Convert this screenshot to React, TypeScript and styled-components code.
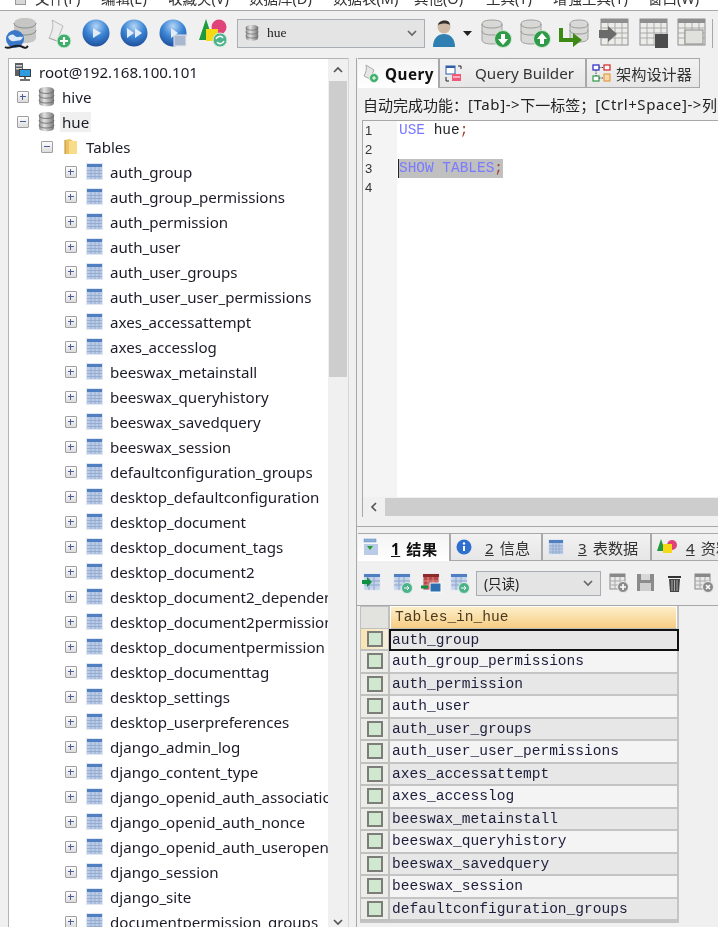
import React from 'react';
import styled, { createGlobalStyle } from 'styled-components';

const Global = createGlobalStyle`
  html, body { margin: 0; padding: 0; background: #f0f0f0; }
  * { box-sizing: border-box; }
  svg { flex: none; display: block; }
`;

const UI = `"Noto Sans", "Noto Sans CJK SC", sans-serif`;
const MONO = `"Liberation Mono", monospace`;

const Page = styled.div`
  width: 718px; height: 927px; overflow: hidden; background: #f0f0f0;
  font-family: ${UI}; color: #1c1c28; filter: blur(0.35px);
  display: flex; flex-direction: column;
`;
const MenuBar = styled.div`
  height: 10px; overflow: hidden; display: flex; align-items: flex-end; padding-left: 15px;
  background: #fff; font-size: 14.5px; color: #333;
`;
const MenuGlyph = styled.div`
  width: 13px; height: 5px; background: #d8d8d8; border: 1px solid #999; border-top: 0; margin-right: 9px; align-self: flex-start;
`;
const MenuItem = styled.span<{ $w: number }>`
  width: ${p => p.$w}px; flex: none; line-height: 20px; height: 20px; margin-bottom: 2px; white-space: nowrap;
`;
const Toolbar = styled.div`
  height: 48px; flex: none; display: flex; align-items: center; padding-left: 2px;
  border-top: 1px solid #a8a8a8; padding-bottom: 3px;
`;
const Tool = styled.div<{ $w: number }>`
  width: ${p => p.$w}px; flex: none; display: flex; justify-content: center; align-items: center;
`;
const Sep = styled.div`
  width: 1px; height: 29px; background: #a8a8a8; margin-left: 8px; flex: none;
`;
const Combo = styled.div<{ $w: number; $h: number }>`
  width: ${p => p.$w}px; height: ${p => p.$h}px; flex: none; display: flex; align-items: center; gap: 8px;
  background: #e4e4e4; border: 1px solid #a9aeb4; padding: 0 6px 0 7px; color: #222;
  & > svg:last-child { color: #666; }
`;
const ComboText = styled.span<{ $font?: string }>`
  flex: 1; font-family: ${p => p.$font || UI}; font-size: 13.5px; white-space: nowrap;
`;
const Main = styled.div`
  flex: 1; display: flex; min-height: 0;
`;
const LeftPanel = styled.div`
  width: 341px; margin-left: 8px; flex: none; display: flex; background: #fff;
  border: 1px solid #b4b4b4; border-bottom: 0; border-right-color: #d8d8d8;
`;
const TreeList = styled.div`
  flex: 1; min-width: 0; overflow: hidden;
`;
const TreeRow = styled.div<{ $depth: number; $root?: boolean }>`
  height: 25px; display: flex; align-items: center; white-space: nowrap;
  padding-left: ${p => (p.$root ? 5 : 8 + p.$depth * 24)}px;
  gap: 9px;
`;
const Expander = styled.div`
  width: 12px; height: 12px; flex: none; border: 1px solid #a0a0a0; border-radius: 1px;
  background: linear-gradient(#fdfdfd, #dcdcdc);
  display: flex; align-items: center; justify-content: center;
`;
const Sign = styled.span<{ $open?: boolean }>`
  display: block; width: 6px; height: 6px;
  background:
    linear-gradient(#4a5f96, #4a5f96) center / 6px 1.4px no-repeat
    ${p => (p.$open ? '' : ', linear-gradient(#4a5f96, #4a5f96) center / 1.4px 6px no-repeat')};
`;
const NodeLabel = styled.span<{ $sel?: boolean }>`
  font-size: 15.1px; line-height: 20px; margin-left: -4px; padding: 0 2px;
  background: ${p => (p.$sel ? '#f0f0f0' : 'transparent')};
`;
const Scroll = styled.div`
  width: 20px; flex: none; background: #f0f0f0; display: flex; flex-direction: column; align-items: center;
`;
const ScrollBtn = styled.div<{ $h: number }>`
  height: ${p => p.$h}px; width: 100%; flex: none; display: flex; align-items: center; justify-content: center; color: #555;
`;
const ThumbV = styled.div`
  width: 18px; height: 296px; background: #cdcdcd; flex: none;
`;
const Spacer = styled.div`
  flex: 1;
`;
const RightPane = styled.div`
  flex: 1; min-width: 0; margin-left: 7px; display: flex; flex-direction: column; overflow: hidden;
  border-left: 1px solid #a8a8a8;
`;
const TabRow = styled.div<{ $h: number }>`
  height: ${p => p.$h}px; flex: none; display: flex; align-items: stretch; padding-left: 1px;
`;
const Tab = styled.div<{ $w: number; $active?: boolean }>`
  width: ${p => p.$w}px; flex: none; display: flex; align-items: center; white-space: nowrap; overflow: hidden;
  font-size: 15.2px; padding-left: 5px;
  border: 1px solid #a8a8a8; border-left-width: ${p => (p.$active ? 0 : 1)}px;
  border-bottom: ${p => (p.$active ? '0' : '1px solid #a8a8a8')};
  background: ${p => (p.$active ? 'linear-gradient(#f4f4f4, #fff)' : 'linear-gradient(#f2f2f2, #e6e6e6)')};
  font-weight: ${p => (p.$active ? 700 : 400)};
  letter-spacing: ${p => (p.$active ? '0.5px' : '0')};
  color: ${p => (p.$active ? '#111' : '#333')};
`;
const TabText = styled.span<{ $ml: number }>`
  margin-left: ${p => p.$ml}px;
`;
const Key = styled.span`
  text-decoration: underline; margin-right: 6px;
`;
const Hint = styled.div`
  height: 32px; flex: none; display: flex; align-items: center; padding-left: 6px; white-space: pre;
  font-size: 15px; color: #222;
`;
const Ltr = styled.span`
  letter-spacing: 0.6px;
`;
const Editor = styled.div`
  height: 377px; flex: none; margin-left: 5px; display: flex; background: #fff;
  border-top: 1px solid #a8a8a8; border-left: 1px solid #a8a8a8;
`;
const Gutter = styled.div`
  width: 34px; flex: none; background: #f4f4f4; padding: 0 0 0 2px;
  font-size: 13px; line-height: 19px; color: #333; font-family: "Liberation Sans", sans-serif;
`;
const Code = styled.div`
  flex: 1; padding: 0 0 0 2px; font-family: ${MONO}; font-size: 14.45px; line-height: 19px; white-space: pre;
`;
const CodeLine = styled.div`
  height: 19px;
`;
const Selected = styled.span`
  display: inline-block; height: 19px; background: #c0c0c0; border-left: 1px solid #222; margin-left: -1px;
`;
const Kw = styled.span`
  color: #7a7aff;
`;
const Plain = styled.span`
  color: #222;
`;
const Semi = styled.span`
  color: #a04030;
`;
const HScroll = styled.div`
  height: 20px; flex: none; margin-left: 5px; display: flex; background: #f0f0f0; border-left: 1px solid #a8a8a8;
`;
const HArrow = styled.div`
  width: 22px; flex: none; display: flex; align-items: center; justify-content: center; color: #555;
`;
const HThumb = styled.div`
  flex: 1; background: #cdcdcd; margin: 1px 0;
`;
const Divider = styled.div`
  height: 16px; flex: none; margin-left: -1px;
  background: linear-gradient(#a8a8a8, #a8a8a8) 0 9px / 100% 1px no-repeat;
`;
const GridBar = styled.div`
  height: 45px; flex: none; display: flex; align-items: center; padding-left: 3px;
  border-bottom: 1px solid #a8a8a8;
`;
const Grid = styled.div`
  width: 319px; margin-left: 3px; display: grid; grid-template-columns: 30px 1fr; grid-auto-rows: 22.5px;
  font-family: ${MONO}; font-size: 14.55px; color: #1e1e3c;
  background: #fff; border-bottom: 2px solid #c4c4c4; border-right: 2px solid #c4c4c4;
`;
const Corner = styled.div`
  background: #e2e2df; border: 1px solid #c0c0c0; border-width: 1px 2px 1px 1px;
`;
const HeadCell = styled.div`
  background: linear-gradient(#fdeec8, #f6cd84); display: flex; align-items: center; padding-left: 4px;
  border: 1px solid #fff; border-bottom-color: #bbb; color: #4a3a20;
`;
const RowHead = styled.div<{ $cur?: boolean }>`
  display: flex; align-items: center; justify-content: center;
  background: ${p => (p.$cur ? 'linear-gradient(90deg, #fbe3b2, #f6efdc)' : '#ecece8')};
  border: 1px solid #c0c0c0; border-width: 0 2px 2px 1px;
`;
const Check = styled.div`
  width: 16px; height: 16px; border: 2px solid #7c7c78; background: #cfe8cf;
`;
const Cell = styled.div<{ $odd: boolean; $cur?: boolean }>`
  display: flex; align-items: center; padding-left: 2px; white-space: nowrap; overflow: hidden;
  background: ${p => (p.$odd ? '#f4f4f4' : '#e7e7e7')};
  border-bottom: 2px solid #c4c4c4;
  ${p => (p.$cur ? 'border: 2px solid #111; margin-left: -1px; margin-right: -2px; padding-left: 1px;' : '')}
`;

const Db = ({ s = 17 }: { s?: number }) => (
  <svg width={s} height={s * 1.25} viewBox="0 0 16 20">
    <defs>
      <linearGradient id="dbg" x1="0" x2="1" y1="0" y2="0">
        <stop offset="0" stopColor="#8c8c8c" /><stop offset=".35" stopColor="#e2e2e2" /><stop offset="1" stopColor="#777" />
      </linearGradient>
    </defs>
    <path d="M1 4c0-2 3-3 7-3s7 1 7 3v12c0 2-3 3-7 3s-7-1-7-3z" fill="url(#dbg)" />
    <path d="M1 4c0 2 3 3 7 3s7-1 7-3M1 8.500c0 2 3 3 7 3s7-1 7-3M1 13c0 2 3 3 7 3s7-1 7-3" fill="none" stroke="#666" strokeWidth=".8" />
  </svg>
);
const TableIco = () => (
  <svg width="17" height="17" viewBox="0 0 17 17">
    <rect x=".5" y=".5" width="16" height="16" fill="#b9cbe6" stroke="#dfe7f3" />
    <rect x="1" y="1" width="15" height="3" fill="#4f7fc0" />
    <path d="M1 7.500h15M1 10.500h15M1 13.500h15M5 4v12M9 4v12M13 4v12" stroke="#8fa6cc" strokeWidth=".8" />
  </svg>
);
const Folder = () => (
  <svg width="17" height="17" viewBox="0 0 17 17">
    <path d="M3 2l5-1 3 2v13H3z" fill="#eec260" />
    <path d="M7 3h8v13H7z" fill="#f7dc8a" />
    <path d="M3 2v14" stroke="#b88d33" />
  </svg>
);
const ServerIco = () => (
  <svg width="18" height="20" viewBox="0 0 18 20">
    <rect x="1" y="1" width="8" height="13" fill="#5c6066" />
    <rect x="2" y="3" width="6" height="1.500" fill="#d0d0d0" /><rect x="2" y="6" width="6" height="1.500" fill="#d0d0d0" />
    <rect x="5" y="7" width="12" height="8" fill="#3a3f46" /><rect x="6" y="8" width="10" height="6" fill="#2f9be0" />
    <path d="M11 15v2M6 18h10" stroke="#444" strokeWidth="1.600" />
  </svg>
);
const Chev = ({ d, s = 12 }: { d: 'u' | 'd' | 'l'; s?: number }) => (
  <svg width={s} height={s} viewBox="0 0 12 12" fill="none" stroke="currentColor" strokeWidth="1.700">
    <path d={d === 'u' ? 'M2 8l4-4 4 4' : d === 'd' ? 'M2 4l4 4 4-4' : 'M8 2L4 6l4 4'} />
  </svg>
);
const Plus = ({ x, y, r = 7 }: { x: number; y: number; r?: number }) => (
  <g>
    <circle cx={x} cy={y} r={r} fill="#3fae6a" stroke="#d8f0e0" strokeWidth="1" />
    <path d={`M${x - r + 3} ${y}h${2 * r - 6}M${x} ${y - r + 3}v${2 * r - 6}`} stroke="#fff" strokeWidth="2.200" />
  </g>
);
const Connect = () => (
  <svg width="34" height="34" viewBox="0 0 34 34">
    <path d="M11 7c0-3 5-5 11-5s11 2 11 5v15c0 3-5 5-11 5s-11-2-11-5z" fill="#c6c6c4" />
    <path d="M11 7c0 3 5 5 11 5s11-2 11-5M11 14c0 3 5 5 11 5s11-2 11-5" fill="none" stroke="#8a8a8a" />
    <circle cx="12" cy="23" r="9" fill="#3b78c8" />
    <path d="M5 21c3-3 5-3 7-1s6 0 8 1c-2 5-5 3-8 4s-5 0-7-4z" fill="#dfeafa" />
    <path d="M2 31c5 3 9-3 15-1s5 3 8 0" fill="none" stroke="#1d1d22" strokeWidth="2" />
  </svg>
);
const NewQuery = () => (
  <svg width="28" height="30" viewBox="0 0 28 30">
    <path d="M7 2l11 6-6 15-8-3c3-6 5-12 3-18z" fill="#ececec" stroke="#b8b8b8" />
    <path d="M4 20l8 3" stroke="#aaa" />
    <Plus x={19} y={23} r={7} />
  </svg>
);
const Orb = ({ kind }: { kind: 'one' | 'two' | 'sel' }) => (
  <svg width="28" height="28" viewBox="0 0 28 28">
    <defs>
      <radialGradient id="orb" cx=".5" cy=".25" r=".85">
        <stop offset="0" stopColor="#b6d5f6" /><stop offset=".45" stopColor="#3c86d6" /><stop offset="1" stopColor="#17408c" />
      </radialGradient>
    </defs>
    <circle cx="14" cy="14" r="13.500" fill="url(#orb)" />
    {kind === 'one' && <path d="M11 9l8 5-8 5z" fill="#e4edf7" />}
    {kind === 'two' && <path d="M7 9l7 5-7 5zM15 9l7 5-7 5z" fill="#e4edf7" />}
    {kind === 'sel' && <><path d="M12 9l7 5-7 5z" fill="#e4edf7" /><rect x="15" y="16" width="12" height="11" fill="#a9b7cf" stroke="#e8e8f0" /></>}
  </svg>
);
const Shapes = () => (
  <svg width="30" height="32" viewBox="0 0 30 32">
    <path d="M8 2l7 21H1z" fill="#1f9a3c" />
    <circle cx="21" cy="10" r="7.500" fill="#e0427a" />
    <rect x="8" y="12" width="12" height="12" fill="#f6d916" />
    <circle cx="22" cy="23" r="7" fill="#4bb28a" stroke="#d8f0e0" />
    <path d="M18 22a4 4 0 017-1M26 24a4 4 0 01-7 1" fill="none" stroke="#fff" strokeWidth="1.500" />
  </svg>
);
const User = () => (
  <svg width="24" height="30" viewBox="0 0 24 30">
    <circle cx="12" cy="9" r="6.500" fill="#cdb9a6" />
    <path d="M6 7c0-5 12-7 12 0-3-2-8-2-12 0z" fill="#33302e" />
    <path d="M1 29c0-9 5-13 11-13s11 4 11 13z" fill="#2f7fb3" />
  </svg>
);
const DbArrow = ({ up }: { up?: boolean }) => (
  <svg width="32" height="30" viewBox="0 0 32 30">
    <path d="M2 6c0-3 5-4 10-4s10 1 10 4v16c0 3-5 4-10 4S2 25 2 22z" fill="#d8d8d6" stroke="#a0a0a0" />
    <path d="M2 6c0 3 5 4 10 4s10-1 10-4M2 13c0 3 5 4 10 4s10-1 10-4" fill="none" stroke="#999" />
    <circle cx="23" cy="21" r="8.500" fill="#2f9a48" stroke="#cfe8d0" />
    <path d={up ? 'M23 15l5 6h-3v5h-4v-5h-3z' : 'M23 27l5-6h-3v-5h-4v5h-3z'} fill="#fff" />
  </svg>
);
const DbIn = () => (
  <svg width="32" height="30" viewBox="0 0 32 30">
    <path d="M12 6c0-3 4-4 9-4s9 1 9 4v14c0 3-4 4-9 4s-9-1-9-4z" fill="#d8d8d6" stroke="#a0a0a0" />
    <path d="M12 6c0 3 4 4 9 4s9-1 9-4M12 12c0 3 4 4 9 4s9-1 9-4" fill="none" stroke="#999" />
    <path d="M1 10h4v10h10v-5l9 7-9 7v-5H1z" fill="#3c8a14" />
  </svg>
);
const GreyGrid = ({ variant }: { variant: 'arrow' | 'calc' | 'multi' }) => (
  <svg width="31" height="30" viewBox="0 0 31 30">
    <rect x="3" y="1" width="27" height="26" fill="#ecece8" stroke="#8e8e8e" />
    <rect x="3" y="1" width="27" height="4" fill="#8e8e8e" />
    <path d="M3 10h27M3 15h27M3 20h27M10 5v22M17 5v22M24 5v22" stroke="#aaa" />
    {variant === 'arrow' && <path d="M1 12h9v-4l9 8-9 8v-4H1z" fill="#6b6b6b" />}
    {variant === 'calc' && <rect x="18" y="16" width="13" height="14" fill="#4c4c4c" />}
    {variant === 'multi' && <rect x="10" y="12" width="18" height="14" fill="#e0e0dc" stroke="#8e8e8e" />}
  </svg>
);
const QueryTabIco = () => (
  <svg width="16" height="20" viewBox="0 0 16 20">
    <path d="M3 1l8 5-4 9-6-3c2-4 3-7 2-11z" fill="#e6e6e6" stroke="#aaa" />
    <circle cx="11" cy="14" r="4.500" fill="#3fae6a" stroke="#d8f0e0" />
    <path d="M9 14h4M11 12v4" stroke="#fff" />
  </svg>
);
const BuilderIco = () => (
  <svg width="17" height="17" viewBox="0 0 17 17">
    <rect x="1" y="1" width="9" height="8" fill="#fff" stroke="#2f5fa8" /><rect x="1" y="1" width="9" height="2" fill="#2f5fa8" />
    <rect x="7" y="9" width="9" height="7" fill="#f05a78" />
    <path d="M8 12h7" stroke="#fff" /><path d="M1 12v4h3M13 1h3v3" stroke="#222" fill="none" />
  </svg>
);
const SchemaIco = () => (
  <svg width="19" height="18" viewBox="0 0 19 18">
    <rect x="1" y="1" width="6" height="5" fill="#fff" stroke="#2222cc" strokeWidth="1.200" />
    <rect x="12" y="1" width="6" height="5" fill="#fff" stroke="#d82020" strokeWidth="1.200" />
    <rect x="1" y="12" width="6" height="5" fill="#fff" stroke="#2f9a48" strokeWidth="1.200" />
    <rect x="12" y="10" width="6" height="7" fill="#f8d8a8" stroke="#e09030" />
    <path d="M7 3.500h5M4 6v6M7 14h5" stroke="#444" strokeDasharray="1.500 1" />
  </svg>
);
const ResIco = () => (
  <svg width="16" height="19" viewBox="0 0 16 19">
    <rect x="1" y="1" width="12" height="3" fill="#8fb0d8" stroke="#5a86c0" strokeWidth=".5" />
    <rect x="1" y="6" width="14" height="11" fill="#b9cbe6" />
    <path d="M7 3v5h3l-3 4-3-4h3z" fill="#22a030" />
  </svg>
);
const PlainTabTable = () => (
  <svg width="16" height="17" viewBox="0 0 16 17">
    <rect x=".5" y=".5" width="15" height="15" fill="#b9cbe6" stroke="#dfe7f3" />
    <rect x="1" y="1" width="14" height="3" fill="#4f7fc0" />
    <path d="M1 7h14M1 10h14M1 13h14M5 4v11M8 4v11M11 4v11" stroke="#8fa6cc" strokeWidth=".8" />
  </svg>
);
const InfoIco = () => (
  <svg width="16" height="16" viewBox="0 0 16 16">
    <circle cx="8" cy="8" r="7.500" fill="#2f6fd0" />
    <path d="M8 7v5" stroke="#fff" strokeWidth="2" /><circle cx="8" cy="4.500" r="1.200" fill="#fff" />
  </svg>
);
const MiniShapes = () => (
  <svg width="20" height="16" viewBox="0 0 20 16">
    <path d="M4 0l4 12H0z" fill="#1f9a3c" /><circle cx="15" cy="6" r="5" fill="#e0427a" /><rect x="6" y="5" width="9" height="9" fill="#f6d916" />
  </svg>
);
const GridIco = ({ kind }: { kind: 'in' | 'refresh' | 'red' | 'refresh2' }) => (
  <svg width="21" height="21" viewBox="0 0 21 21">
    <rect x="2" y="1" width="16" height="16" fill={kind === 'red' ? '#b84a4a' : '#c4d2ea'} stroke="#dfe7f3" />
    <rect x="2" y="1" width="16" height="3" fill={kind === 'red' ? '#8c2a2a' : '#4f7fc0'} />
    <path d="M2 8h16M2 12h16M7 4v13M12 4v13" stroke={kind === 'red' ? '#e08a8a' : '#8fa6cc'} />
    {kind === 'in' && <path d="M0 7h5V4l5 5-5 5v-3H0z" fill="#109040" />}
    {(kind === 'refresh' || kind === 'refresh2') && <><circle cx="15" cy="15" r="5.500" fill="#4bb28a" stroke="#e0f0e8" /><path d="M12 15h5M15 13l2 2-2 2" stroke="#fff" fill="none" /></>}
    {kind === 'red' && <><rect x="9" y="10" width="11" height="9" fill="#2f6fb0" stroke="#fff" /><path d="M0 14h7" stroke="#109040" strokeWidth="3" /></>}
  </svg>
);
const GreyAct = ({ kind }: { kind: 'add' | 'save' | 'trash' | 'x' }) => (
  <svg width="20" height="20" viewBox="0 0 20 20">
    {kind === 'save' && <><rect x="1" y="1" width="17" height="17" fill="#8b8b8b" /><rect x="5" y="1" width="9" height="6" fill="#d8d8d8" /><rect x="4" y="10" width="11" height="8" fill="#cfcfcf" /></>}
    {kind === 'trash' && <><rect x="3" y="3" width="13" height="2" fill="#333" /><path d="M4 6h11l-1 13H5z" fill="#444" /><path d="M7 7v11M9.500 7v11M12 7v11" stroke="#aaa" /></>}
    {(kind === 'add' || kind === 'x') && <>
      <rect x="1" y="1" width="15" height="15" fill="#e8e8e8" stroke="#888" /><rect x="1" y="1" width="15" height="3" fill="#888" />
      <path d="M1 8h15M1 12h15M6 4v12M11 4v12" stroke="#aaa" />
      <circle cx="14" cy="14" r="5.500" fill="#8a8a8a" stroke="#eee" />
      <path d={kind === 'add' ? 'M11 14h6M14 11v6' : 'M12 12l4 4M16 12l-4 4'} stroke="#fff" strokeWidth="1.600" />
    </>}
  </svg>
);

const tables = [
  'auth_group', 'auth_group_permissions', 'auth_permission', 'auth_user', 'auth_user_groups', 'auth_user_user_permissions',
  'axes_accessattempt', 'axes_accesslog', 'beeswax_metainstall', 'beeswax_queryhistory', 'beeswax_savedquery', 'beeswax_session',
  'defaultconfiguration_groups', 'desktop_defaultconfiguration', 'desktop_document', 'desktop_document_tags', 'desktop_document2',
  'desktop_document2_dependencies', 'desktop_document2permission', 'desktop_documentpermission', 'desktop_documenttag',
  'desktop_settings', 'desktop_userpreferences', 'django_admin_log', 'django_content_type', 'django_openid_auth_association',
  'django_openid_auth_nonce', 'django_openid_auth_useropenid', 'django_session', 'django_site', 'documentpermission_groups',
];
const menus: [string, number][] = [['文件(F)', 66], ['编辑(E)', 67], ['收藏夹(V)', 81], ['数据库(D)', 84], ['数据表(M)', 81], ['其他(O)', 72], ['工具(T)', 67], ['增强工具(Y)', 95], ['窗口(W)', 70]];

export default function App() {
  return (
    <Page>
      <Global />
      <MenuBar>
        <MenuGlyph />
        {menus.map(([m, w]) => <MenuItem key={m} $w={w}>{m}</MenuItem>)}
      </MenuBar>
      <Toolbar>
        <Tool $w={35}><Connect /></Tool>
        <Tool $w={44}><NewQuery /></Tool>
        <Tool $w={30}><Orb kind="one" /></Tool>
        <Tool $w={46}><Orb kind="two" /></Tool>
        <Tool $w={32}><Orb kind="sel" /></Tool>
        <Tool $w={48}><Shapes /></Tool>
        <Combo $w={188} $h={29}>
          <Db s={14} />
          <ComboText $font={`"Liberation Serif", serif`}>hue</ComboText>
          <Chev d="d" />
        </Combo>
        <Tool $w={38}><User /></Tool>
        <Tool $w={9}><svg width="9" height="5" viewBox="0 0 9 5"><path d="M0 0h9L4.500 5z" fill="#222" /></svg></Tool>
        <Tool $w={48}><DbArrow /></Tool>
        <Tool $w={30}><DbArrow up /></Tool>
        <Tool $w={48}><DbIn /></Tool>
        <Tool $w={30}><GreyGrid variant="arrow" /></Tool>
        <Tool $w={48}><GreyGrid variant="calc" /></Tool>
        <Tool $w={28}><GreyGrid variant="multi" /></Tool>
        <Sep />
      </Toolbar>
      <Main>
        <LeftPanel>
          <TreeList>
            <TreeRow $depth={0} $root><ServerIco /><NodeLabel>root@192.168.100.101</NodeLabel></TreeRow>
            <TreeRow $depth={0}><Expander><Sign /></Expander><Db /><NodeLabel>hive</NodeLabel></TreeRow>
            <TreeRow $depth={0}><Expander><Sign $open /></Expander><Db /><NodeLabel $sel>hue</NodeLabel></TreeRow>
            <TreeRow $depth={1}><Expander><Sign $open /></Expander><Folder /><NodeLabel>Tables</NodeLabel></TreeRow>
            {tables.map(t => (
              <TreeRow key={t} $depth={2}><Expander><Sign /></Expander><TableIco /><NodeLabel>{t}</NodeLabel></TreeRow>
            ))}
          </TreeList>
          <Scroll>
            <ScrollBtn $h={22}><Chev d="u" /></ScrollBtn>
            <ThumbV />
            <Spacer />
            <ScrollBtn $h={10}><Chev d="d" /></ScrollBtn>
          </Scroll>
        </LeftPanel>
        <RightPane>
          <TabRow $h={30}>
            <Tab $w={81} $active><QueryTabIco /><TabText $ml={6}>Query</TabText></Tab>
            <Tab $w={147}><BuilderIco /><TabText $ml={13}>Query Builder</TabText></Tab>
            <Tab $w={114}><SchemaIco /><TabText $ml={5}>架构设计器</TabText></Tab>
          </TabRow>
          <Hint>自动完成功能：<Ltr>[Tab]-&gt;</Ltr>下一标签；<Ltr>[Ctrl+Space]-&gt;</Ltr>列出所有标签</Hint>
          <Editor>
            <Gutter><div>1</div><div>2</div><div>3</div><div>4</div></Gutter>
            <Code>
              <CodeLine><Kw>USE</Kw> <Plain>hue</Plain><Semi>;</Semi></CodeLine>
              <CodeLine />
              <CodeLine><Selected><Kw>SHOW TABLES</Kw><Semi>;</Semi></Selected></CodeLine>
            </Code>
          </Editor>
          <HScroll><HArrow><Chev d="l" /></HArrow><HThumb /></HScroll>
          <Divider />
          <TabRow $h={28}>
            <Tab $w={92} $active><ResIco /><TabText $ml={12}><Key>1</Key>结果</TabText></Tab>
            <Tab $w={92}><InfoIco /><TabText $ml={13}><Key>2</Key>信息</TabText></Tab>
            <Tab $w={109}><PlainTabTable /><TabText $ml={14}><Key>3</Key>表数据</TabText></Tab>
            <Tab $w={70}><MiniShapes /><TabText $ml={9}><Key>4</Key>资料</TabText></Tab>
          </TabRow>
          <GridBar>
            <Tool $w={24}><GridIco kind="in" /></Tool>
            <Tool $w={36}><GridIco kind="refresh" /></Tool>
            <Tool $w={22}><GridIco kind="red" /></Tool>
            <Tool $w={34}><GridIco kind="refresh2" /></Tool>
            <Combo $w={125} $h={25}>
              <ComboText>(只读)</ComboText>
              <Chev d="d" />
            </Combo>
            <Tool $w={36}><GreyAct kind="add" /></Tool>
            <Tool $w={18}><GreyAct kind="save" /></Tool>
            <Tool $w={40}><GreyAct kind="trash" /></Tool>
            <Tool $w={18}><GreyAct kind="x" /></Tool>
          </GridBar>
          <Grid>
            <Corner />
            <HeadCell>Tables_in_hue</HeadCell>
            {tables.slice(0, 13).map((t, i) => (
              <React.Fragment key={t}>
                <RowHead $cur={i === 0}><Check /></RowHead>
                <Cell $odd={i % 2 === 1} $cur={i === 0}>{t}</Cell>
              </React.Fragment>
            ))}
          </Grid>
        </RightPane>
      </Main>
    </Page>
  );
}
